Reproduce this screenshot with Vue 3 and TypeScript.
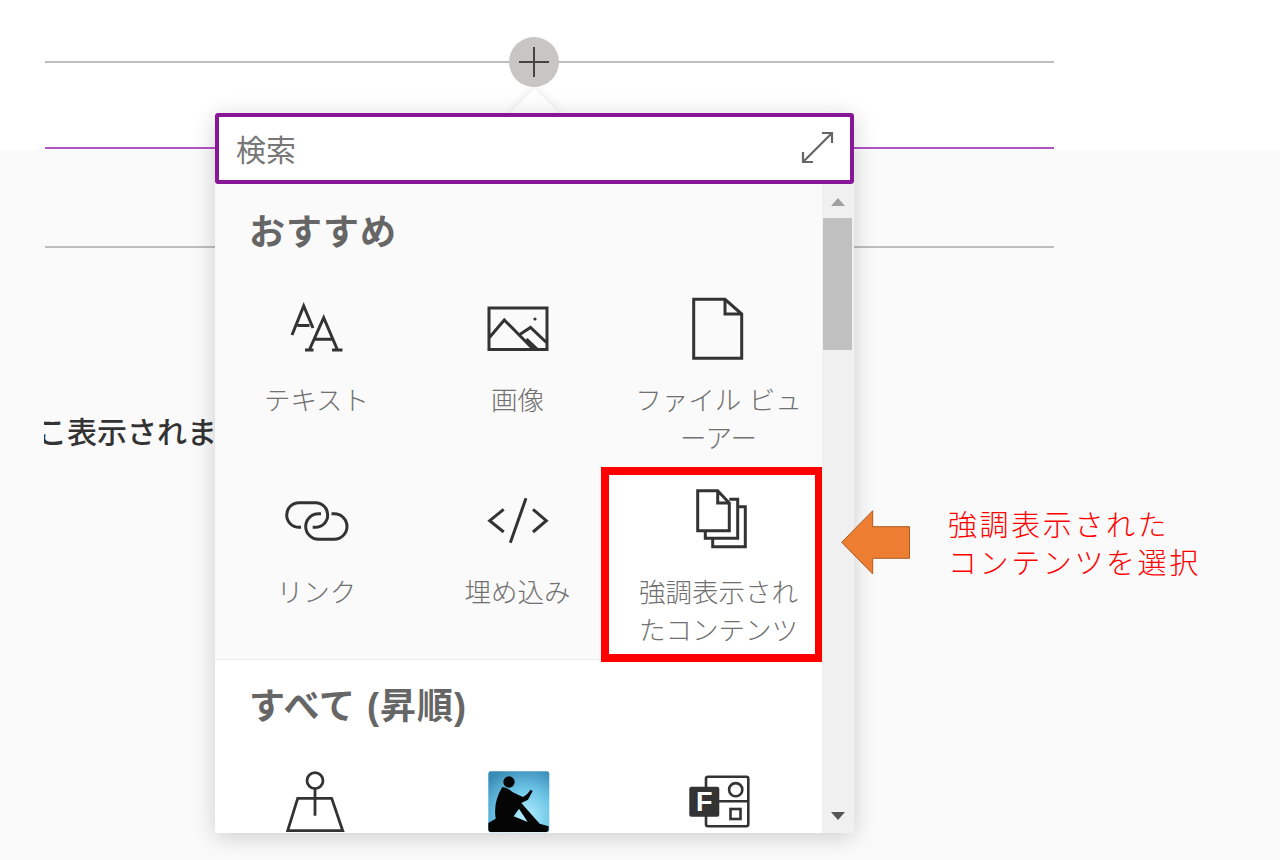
<script setup lang="ts">
interface Tile {
  label: string;
  d: string;
  dots?: boolean;
  active?: boolean;
}

const tiles: Tile[] = [
  {
    label: 'テキスト',
    d: 'M10 39 L21.7 10 L31 32 M15.5 29.5 H27.5 M23 54 H31.5 M50 54 H60.5 M27.3 54 L41.7 21.7 L55.5 54 M32 43.3 H51',
  },
  {
    label: '画像',
    d: 'M6 12 H64 V53.5 H6 Z M6 42 L21.3 24 L50 53 M36 39 L47.5 31.5 L64 47 M43.5 43 L54 53',
    dots: true,
  },
  {
    label: 'ファイル ビュ\nーアー',
    d: 'M9.7 3.3 H41 L57.7 18 V62.3 H9.7 Z M41 3.3 V18 H57.7',
  },
  {
    label: 'リンク',
    d: 'M19 39.3 H17 A12.3 12.3 0 0 1 17 14.7 H33.4 A12.3 12.3 0 0 1 33.4 39.3 H30.7 M39 25.7 H36.5 A12.8 12.8 0 0 0 36.5 51.3 H52.2 A12.8 12.8 0 0 0 52.2 25.7 H49.5',
  },
  {
    label: '埋め込み',
    d: 'M20.7 21.3 L6.7 32.7 L20.7 44 M50 21.3 L63.3 32.7 L50 44 M43 10.3 L27.3 54.7',
  },
  {
    label: '強調表示され\nたコンテンツ',
    d: 'M13.7 2.7 H33.7 L45.3 15 V42.7 H13.7 Z M33.7 2.7 V15 H45.3 M45.3 11.3 H53.7 V50.3 H21.3 V42.7 M53.7 18.7 H61.3 V58.7 H28.7 V50.3',
    active: true,
  },
];
</script>

<template>
  <div class="page">
    <div class="lines">
      <div class="line"></div>
      <div class="line purple"></div>
      <div class="line third"></div>
      <div class="note">こ表示されま</div>
    </div>

    <button class="add">
      <svg viewBox="0 0 50 50" width="50" height="50">
        <path d="M25 10 V40 M10 25 H40" stroke="#444" stroke-width="2" fill="none" />
      </svg>
    </button>
    <div class="beak"></div>

    <div class="panel">
      <div class="search">
        <span class="placeholder">検索</span>
        <svg class="expand" viewBox="0 0 34 34" width="34" height="34">
          <path d="M3 31 L32 2 M22 2 H32 V12 M3 21 V31 H13" stroke="#666" stroke-width="2.2" fill="none" />
        </svg>
      </div>

      <div class="body">
        <div class="content">
          <section class="featured">
            <h2>おすすめ</h2>
            <div class="grid">
              <div v-for="t in tiles" :key="t.label" class="tile" :class="{ active: t.active }">
                <div v-if="t.active" class="marker"></div>
                <svg class="icon" viewBox="0 0 70 66" width="70" height="66">
                  <path :d="t.d" stroke="#333" stroke-width="3" fill="none" />
                  <circle v-if="t.dots" cx="52" cy="23" r="1.6" fill="#333" />
                </svg>
                <div class="label">{{ t.label }}</div>
              </div>
            </div>
          </section>

          <section class="all">
            <h2>すべて (昇順)</h2>
            <div class="grid">
              <div class="tile">
                <svg class="icon" viewBox="0 0 70 66" width="70" height="66">
                  <circle cx="33" cy="11.7" r="8" stroke="#333" stroke-width="2.8" fill="none" />
                  <path d="M33 19.7 V46.7 M15.7 29.3 H49.7 L60.7 61.7 H5.7 Z" stroke="#333" stroke-width="2.8" fill="none" />
                </svg>
              </div>
              <div class="tile">
                <svg class="icon" viewBox="0 0 70 66" width="70" height="66">
                  <defs>
                    <radialGradient id="sky" cx="0.6" cy="0.75" r="0.85">
                      <stop offset="0" stop-color="#b4f0ff" />
                      <stop offset="0.55" stop-color="#6cc4e6" />
                      <stop offset="1" stop-color="#3a8ab6" />
                    </radialGradient>
                  </defs>
                  <rect x="5.3" y="2.3" width="61" height="61" rx="2.5" fill="url(#sky)" />
                  <g transform="translate(0 -2) scale(.3333)" fill="#050505" fill-rule="evenodd">
                    <circle cx="78" cy="45" r="17" />
                    <path d="M58 60 Q75 62 88 75 L120 90 L132 82 L143 68 L149 72 L135 98 L115 108 L170 170 L197 178 V185 Q197 195 188 195 H24 Q16 195 16 185 V168 L38 155 Q30 105 58 60 Z M92 148 L108 125 L134 165 Z" />
                  </g>
                </svg>
              </div>
              <div class="tile">
                <svg class="icon" viewBox="0 0 70 66" width="70" height="66">
                  <rect x="22" y="7.7" width="42.3" height="49.6" rx="2" stroke="#333" stroke-width="2.6" fill="none" />
                  <path d="M22 32.3 H64.3" stroke="#333" stroke-width="2.6" />
                  <circle cx="51.7" cy="20.7" r="6.6" stroke="#333" stroke-width="2.6" fill="none" />
                  <rect x="46.5" y="40" width="10" height="10" stroke="#333" stroke-width="2.6" fill="none" />
                  <rect x="5.3" y="17.7" width="30" height="30" rx="2" fill="#333" />
                  <text x="20.3" y="41.5" class="f">F</text>
                </svg>
              </div>
            </div>
          </section>
        </div>

        <div class="scrollbar">
          <div class="arrow up"></div>
          <div class="thumb"></div>
          <div class="arrow down"></div>
        </div>
      </div>
    </div>

    <div class="callout">
      <svg viewBox="0 0 72 66" width="72" height="66">
        <path d="M1.7 33.3 L32.7 1.7 V17.7 H69.5 V49.3 H32.7 V65 Z" fill="#ed7d31" stroke="#ae5a21" stroke-width="1" />
      </svg>
      <p>強調表示された<br />コンテンツを選択</p>
    </div>
  </div>
</template>

<style>
html,
body {
  margin: 0;
  background: #fff;
}
</style>

<style scoped>
.page {
  position: relative;
  width: 1280px;
  height: 860px;
  overflow: hidden;
  background: linear-gradient(#fff 150px, #fbfafa 150px);
  font-family: "Liberation Sans", "Noto Sans CJK JP", sans-serif;
}

.lines {
  padding: 61px 226px 0 45px;
}

.line {
  height: 2px;
  background: #bdbdbd;
}

.line.purple {
  margin-top: 84px;
  background: #b152c4;
}

.line.third {
  margin-top: 97px;
}

/* first character is cut by the left edge in the capture */
.note {
  margin: 165px 0 0 -8px;
  clip-path: inset(0 0 0 7px);
  white-space: nowrap;
  font-size: 30px;
  font-weight: 500;
  line-height: 40px;
  color: #333;
}

.add {
  position: absolute;
  left: 509px;
  top: 37px;
  width: 50px;
  height: 50px;
  padding: 0;
  border: none;
  border-radius: 50%;
  background: #c8c6c4;
}

.add svg {
  display: block;
}

.beak {
  position: absolute;
  left: 518px;
  top: 95px;
  width: 33px;
  height: 33px;
  background: #fff;
  transform: rotate(45deg);
  box-shadow: 0 0 10px rgba(0, 0, 0, 0.12);
}

.panel {
  position: absolute;
  left: 215px;
  top: 113px;
  width: 639px;
  height: 720px;
  display: flex;
  flex-direction: column;
  background: #fff;
  box-shadow: 0 4px 22px rgba(0, 0, 0, 0.18);
}

.search {
  height: 71px;
  box-sizing: border-box;
  display: flex;
  align-items: center;
  justify-content: space-between;
  padding: 0 16px 2px 17px;
  border: 4px solid #881798;
  border-radius: 3px;
  background: #fff;
}

.placeholder {
  font-size: 30px;
  color: #777;
}

.body {
  flex: 1;
  min-height: 0;
  display: flex;
}

.content {
  flex: 1;
  min-width: 0;
  overflow: hidden;
  background: #fff;
}

.featured {
  position: relative;
  z-index: 1;
  height: 476px;
  box-sizing: border-box;
  padding-top: 26px;
  border-bottom: 1px solid #eee;
  background: #fbfafa;
}

h2 {
  margin: 0 0 0 34px;
  height: 46px;
  font-size: 36px;
  font-weight: 700;
  line-height: 46px;
  letter-spacing: 1px;
  color: #666;
}

.grid {
  display: grid;
  grid-template-columns: repeat(3, 201px);
  row-gap: 20px;
  padding: 40px 0 0 1px;
}

.tile {
  position: relative;
  height: 172px;
  text-align: center;
}

.icon {
  display: block;
  position: relative;
  margin: 0 auto;
  z-index: 1;
}

.label {
  position: relative;
  z-index: 1;
  margin-top: 20px;
  font-size: 26.5px;
  font-weight: 300;
  line-height: 38px;
  white-space: pre-line;
  color: #707070;
}

.marker {
  position: absolute;
  left: -17px;
  top: -21px;
  width: 222px;
  height: 195px;
  box-sizing: border-box;
  border: 8px solid #f00;
  background: #fff;
}

.all {
  padding-top: 24px;
}

.all .grid {
  padding-top: 39px;
}

.f {
  font-size: 27px;
  font-weight: 700;
  text-anchor: middle;
  fill: #fff;
}

.scrollbar {
  width: 32px;
  box-sizing: border-box;
  display: flex;
  flex-direction: column;
  align-items: center;
  padding: 0 2px 0 1px;
  background: #f0f0f0;
}

.arrow {
  width: 0;
  height: 0;
  border-left: 7.5px solid transparent;
  border-right: 7.5px solid transparent;
}

.arrow.up {
  margin-top: 14px;
  border-bottom: 8px solid #a0a0a0;
}

.arrow.down {
  margin-top: auto;
  margin-bottom: 13px;
  border-top: 8px solid #555;
}

.thumb {
  width: 100%;
  height: 132px;
  margin-top: 12px;
  background: #c0c0c0;
}

.callout {
  position: absolute;
  left: 840px;
  top: 509px;
  display: flex;
  align-items: flex-start;
  gap: 36px;
}

.callout svg {
  display: block;
}

.callout p {
  margin: -2px 0 0;
  font-size: 29px;
  font-weight: 300;
  line-height: 38px;
  letter-spacing: 2.6px;
  white-space: nowrap;
  color: #f00;
}
</style>
